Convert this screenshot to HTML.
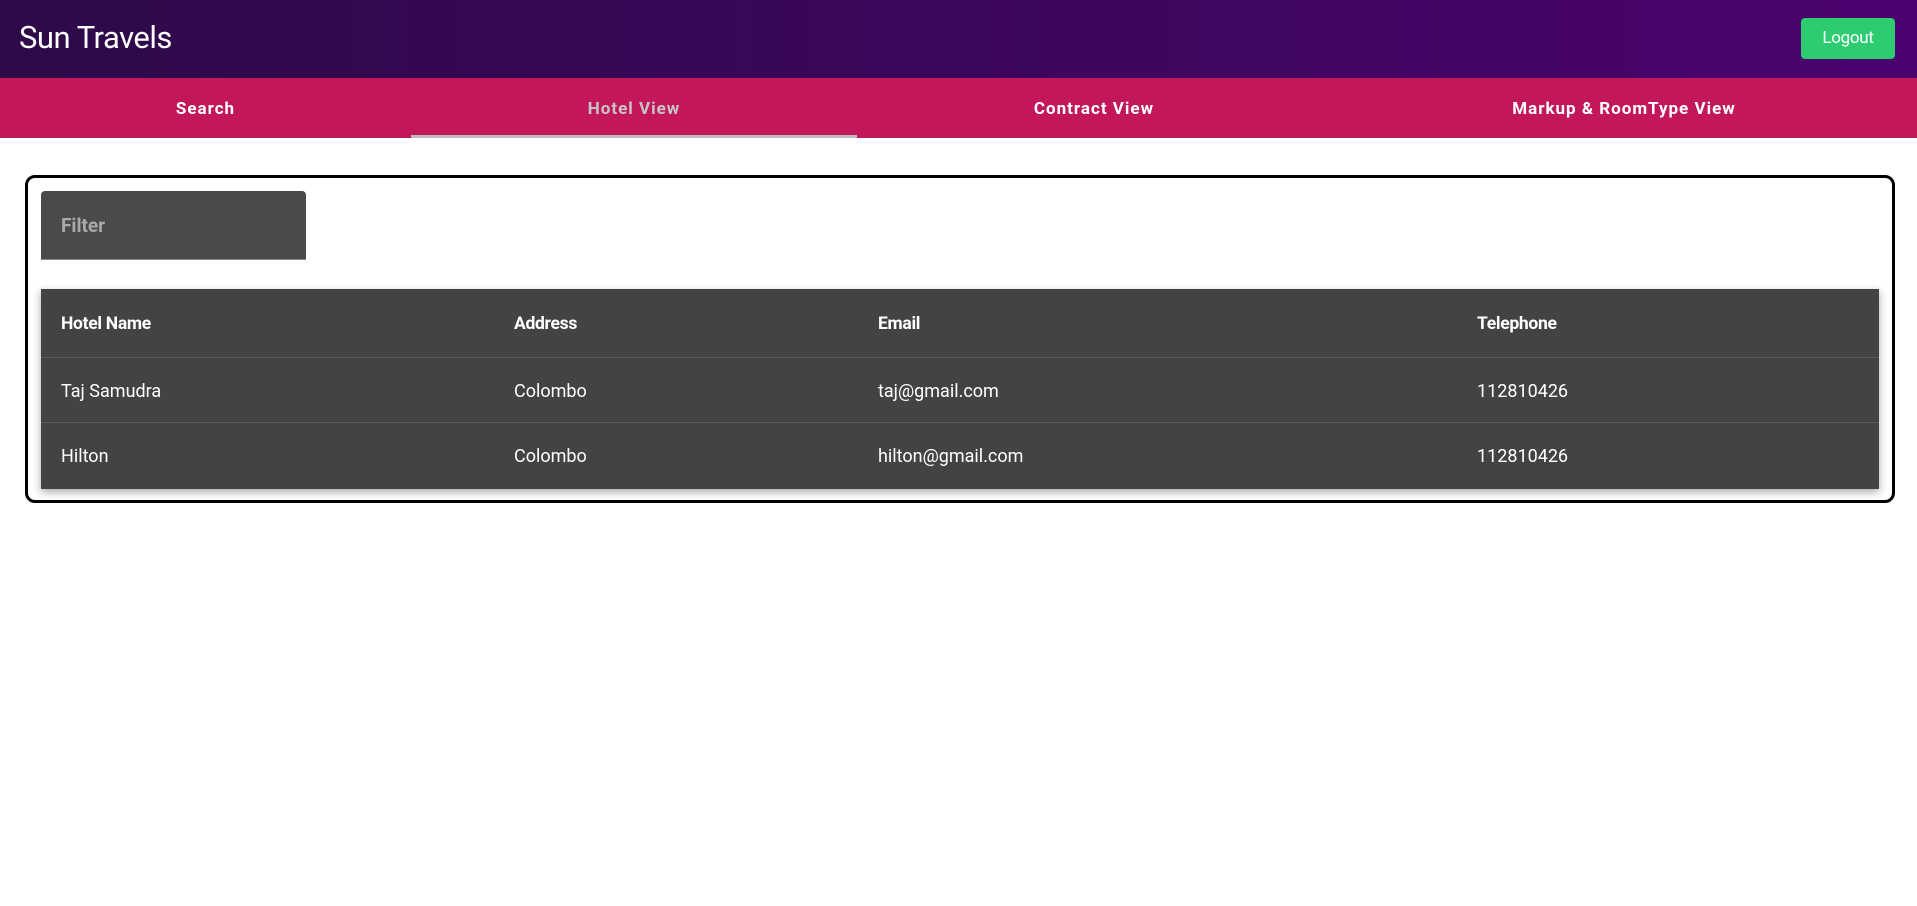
<!DOCTYPE html>
<html><head><style>
body{margin:0;width:1917px;height:906px;background:#fff;font-family:Roboto,"Liberation Sans",Arial,sans-serif;overflow:hidden;position:relative}
.hdr{position:absolute;left:0;top:0;width:1917px;height:78px;background:linear-gradient(90deg,#2d0a48,#4b036f)}
.title{position:absolute;left:19px;top:19px;color:#fff;font-size:31px;letter-spacing:-0.5px}
.logout{position:absolute;left:1801px;top:18px;width:94px;height:41px;background:#2ecc71;border-radius:4px;color:#fff;font-size:17px;text-align:center;line-height:40px;letter-spacing:-0.3px}
.tabs{position:absolute;left:0;top:78px;width:1917px;height:60px;background:#c2185b}
.tab{position:absolute;top:0;height:60px;line-height:62px;text-align:center;color:#fff;font-weight:bold;font-size:17px;letter-spacing:1px}
.ind{position:absolute;left:411px;top:135px;width:446px;height:3px;background:#bdbdbd}
.card{position:absolute;left:25px;top:175px;width:1864px;height:322px;border:3px solid #000;border-radius:10px}
.filter{position:absolute;left:41px;top:191px;width:265px;height:69px;background:#4a4a4a;border-radius:4px 4px 0 0;border-bottom:1px solid #888;box-sizing:border-box}
.filter span{position:absolute;left:20px;top:23px;color:#a9a9a9;font-size:19px;font-weight:bold}
.tbl{position:absolute;left:41px;top:289px;width:1838px;height:200px;background:#434343;box-shadow:0 3px 8px rgba(0,0,0,.35)}
.row{position:absolute;left:0;width:1838px;border-bottom:1px solid #595959}
.c{position:absolute;color:#fff;font-size:18px}
.h .c{font-weight:bold;letter-spacing:-0.3px;font-size:17.5px}
</style></head><body>
<div class="hdr"><div class="title">Sun Travels</div><div class="logout">Logout</div></div>
<div class="tabs">
<div class="tab" style="left:0;width:411px">Search</div>
<div class="tab" style="left:411px;width:446px;color:#c6c6c6">Hotel View</div>
<div class="tab" style="left:857px;width:474px">Contract View</div>
<div class="tab" style="left:1331px;width:586px">Markup &amp; RoomType View</div>
</div>
<div class="ind"></div>
<div class="card"></div>
<div class="filter"><span>Filter</span></div>
<div class="tbl">
<div class="row h" style="top:0;height:68px"><div class="c" style="left:20px;top:25px">Hotel Name</div><div class="c" style="left:473px;top:25px">Address</div><div class="c" style="left:837px;top:25px">Email</div><div class="c" style="left:1436px;top:25px">Telephone</div></div>
<div class="row" style="top:69px;height:64px"><div class="c" style="left:20px;top:23px">Taj Samudra</div><div class="c" style="left:473px;top:23px">Colombo</div><div class="c" style="left:837px;top:23px">taj@gmail.com</div><div class="c" style="left:1436px;top:23px">112810426</div></div>
<div class="row" style="top:134px;height:66px;border:none"><div class="c" style="left:20px;top:23px">Hilton</div><div class="c" style="left:473px;top:23px">Colombo</div><div class="c" style="left:837px;top:23px">hilton@gmail.com</div><div class="c" style="left:1436px;top:23px">112810426</div></div>
</div>
</body></html>
